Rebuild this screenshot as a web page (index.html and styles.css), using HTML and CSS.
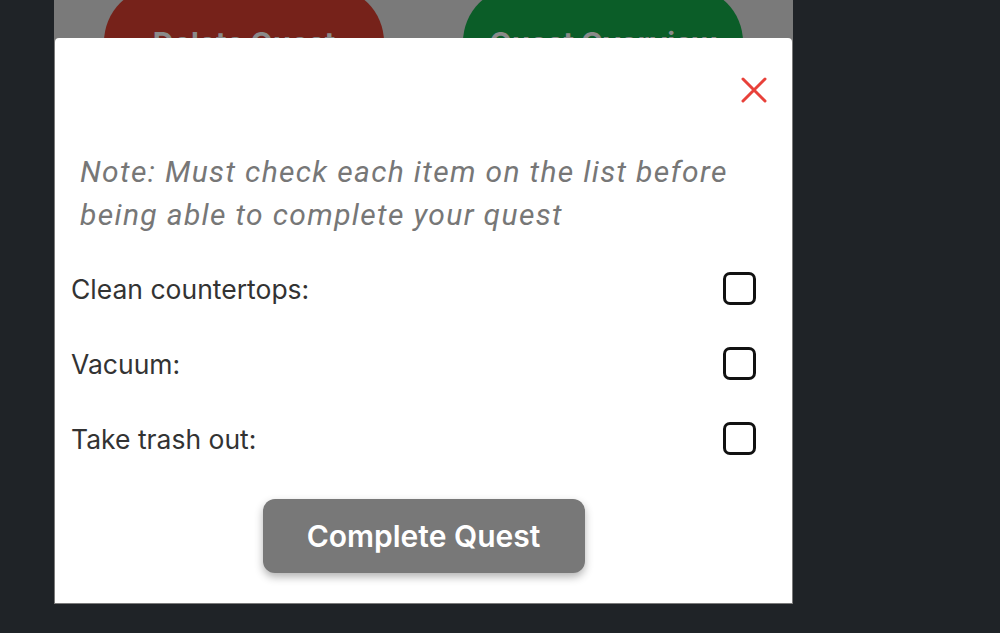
FILE: index.html
```html
<!DOCTYPE html>
<html lang="en">
<head>
<meta charset="utf-8">
<title>Complete Quest</title>
<link rel="stylesheet" href="styles.css">
</head>
<body>
<div class="stage">
  <div class="actions">
    <button class="bg-btn bg-red">Delete Quest</button>
    <button class="bg-btn bg-green">Quest Overview</button>
  </div>
  <div class="modal">
    <div class="modal-head">
      <button class="close" aria-label="Close">
        <svg width="28" height="28" viewBox="0 0 28 28"><path d="M3 3 L25 25 M25 3 L3 25" stroke="#e8413a" stroke-width="3" stroke-linecap="round" fill="none"/></svg>
      </button>
    </div>
    <p class="note">Note: Must check each item on the list before being able to complete your quest</p>
    <ul class="tasks">
      <li class="task"><label class="task-label" for="t1">Clean countertops:</label><input class="box" type="checkbox" id="t1"></li>
      <li class="task"><label class="task-label" for="t2">Vacuum:</label><input class="box" type="checkbox" id="t2"></li>
      <li class="task"><label class="task-label" for="t3">Take trash out:</label><input class="box" type="checkbox" id="t3"></li>
    </ul>
    <div class="footer">
      <button class="complete">Complete Quest</button>
    </div>
  </div>
</div>
</body>
</html>
```
FILE: styles.css
```css
html, body {
  margin: 0;
  padding: 0;
}
body {
  background: #1f2327;
  font-family: Inter, "Noto Sans", sans-serif;
  width: 1000px;
  height: 633px;
  overflow: hidden;
}
.stage {
  margin-left: 54px;
  width: 739px;
  height: 604px;
  background: #7a7a7a;
  position: relative;
  overflow: hidden;
}
.actions {
  display: flex;
  gap: 79px;
  padding-left: 50px;
  margin-top: -13px;
}
.bg-btn {
  width: 280px;
  height: 110px;
  border: none;
  border-radius: 55px;
  font-family: Inter, sans-serif;
  font-weight: 700;
  font-size: 29px;
  color: #8a8a8a;
  display: flex;
  align-items: center;
  justify-content: center;
}
.bg-red { background: #76221a; }
.bg-green { background: #0b5d28; }
.modal {
  position: absolute;
  left: 1px;
  top: 38px;
  width: 737px;
  height: 565px;
  background: #fff;
  border-radius: 4px 4px 0 0;
  box-sizing: border-box;
  padding-top: 38px;
  display: flex;
  flex-direction: column;
}
.modal-head {
  display: flex;
  justify-content: flex-end;
  padding-right: 24px;
  height: 28px;
}
.close {
  border: none;
  background: none;
  padding: 0;
  width: 28px;
  height: 28px;
  display: block;
}
.close svg { display: block; }
.note {
  margin: 46px 40px 0 25px;
  font-family: Roboto, sans-serif;
  font-style: italic;
  font-size: 30px;
  letter-spacing: 1.35px;
  line-height: 43px;
  color: #777;
}
.tasks {
  list-style: none;
  margin: 15px 0 0 0;
  padding: 0 36px 0 16px;
}
.task {
  height: 75px;
  display: flex;
  align-items: center;
  justify-content: space-between;
}
.task-label {
  font-size: 26.5px;
  color: #333;
}
.box {
  appearance: none;
  -webkit-appearance: none;
  margin: 0;
  width: 33px;
  height: 33px;
  border: 3px solid #111;
  border-radius: 7px;
  box-sizing: border-box;
  background: #fff;
}
.footer {
  display: flex;
  justify-content: center;
  margin-top: 23px;
}
.complete {
  width: 322px;
  height: 74px;
  border: none;
  border-radius: 12px;
  background: #787878;
  color: #fff;
  font-family: Inter, sans-serif;
  font-weight: 600;
  font-size: 30px;
  box-shadow: 0 4px 8px rgba(0,0,0,0.3);
}
```
